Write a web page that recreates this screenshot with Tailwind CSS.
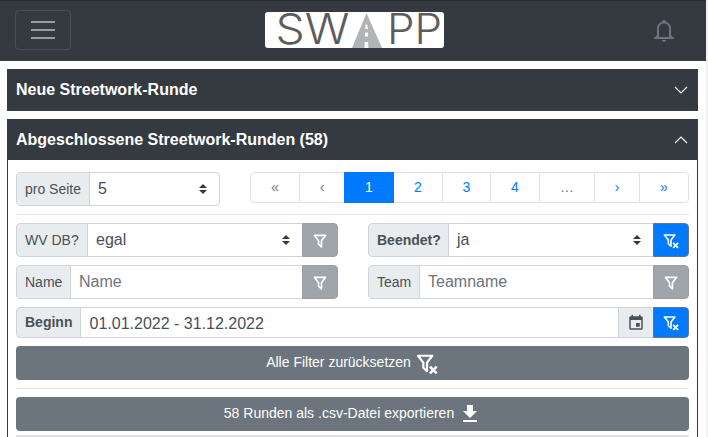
<!DOCTYPE html>
<html lang="de">
<head>
<meta charset="utf-8">
<title>SWAPP</title>
<script src="https://cdn.jsdelivr.net/npm/@tailwindcss/browser@4"></script>
</head>
<body class="w-[708px] h-[437px] overflow-hidden bg-[#f1f1f1] font-['Liberation_Sans',Arial,sans-serif] text-sm text-[#495057]">
<svg class="hidden">
  <symbol id="funnel" viewBox="0 0 24 24"><path fill="none" stroke="currentColor" stroke-width="2.5" stroke-linejoin="round" d="M3.6 3.5h16.8L14.2 11.5v9.2L9.8 16.8v-5.3z"/></symbol>
  <symbol id="funnelx" viewBox="0 0 24 24"><g fill="none" stroke="currentColor" stroke-width="2.4"><path d="M2.2 3h15.6L12 10.5v9.4l-4-3.8v-5.6z" stroke-linejoin="round"/><path d="m15.2 14.8 7.4 7.4m0-7.4-7.4 7.4" stroke-width="2.7"/></g></symbol>
  <symbol id="updown" viewBox="0 0 8 10"><path fill="#343a40" d="M4 0 0 4h8zM4 10 0 6h8z"/></symbol>
</svg>
<div class="w-[706px] h-[437px] bg-white">
  <nav class="h-[61px] bg-[#343a40] border-t border-[#2b2b2b] flex items-center justify-between pl-[15px] pr-[31px] pb-[2px]">
    <button class="w-14 h-10 border border-white/10 rounded flex flex-col items-center justify-center gap-[6px]" aria-label="Menü">
      <span class="w-6 h-[2px] bg-white/50"></span><span class="w-6 h-[2px] bg-white/50"></span><span class="w-6 h-[2px] bg-white/50"></span>
    </button>
    <svg class="w-[179px] h-9 rounded-[3px] bg-white mr-[15px] overflow-visible" viewBox="0 0 179 36" font-family="Inter, Roboto, sans-serif" font-weight="300" fill="#5c5c5c" font-size="42">
      <text x="10.5" y="32.2" textLength="74" lengthAdjust="spacingAndGlyphs">SW</text>
      <path fill="#b1b3b4" d="M101.5 1 117 36H87z"/>
      <path fill="#fff" d="M100.6 12.5h1.8l.4 4.5h-2.6zM100 20.5h2.8l.2 4h-3.2zM99.7 30h3.4l.3 6h-4z"/>
      <text x="122" y="32.2" textLength="55" lengthAdjust="spacingAndGlyphs">PP</text>
    </svg>
    <svg class="w-[22px] h-6 text-[#6c757d] mt-px" viewBox="0 0 22 24" fill="none" stroke="currentColor" stroke-width="2"><path d="M5 18.5V9.6C5 5.8 7.4 3.4 11 3.4s6 2.4 6 6.2v8.9"/><path d="M1.2 19h19.6"/><path fill="currentColor" stroke="none" d="M9.3 3.2a1.8 1.8 0 1 1 3.4 0zM9 21h4a2 2 0 0 1-4 0zM4 16l-2 2.5h3zM18 16l2 2.5h-3z"/></svg>
  </nav>
  <main class="pt-2 pl-[7px] pr-2">
    <section class="h-[42px] bg-[#343a40] text-white flex items-center justify-between pl-[9px] pr-[9px]">
      <h2 class="text-base font-bold">Neue Streetwork-Runde</h2>
      <svg class="w-4 h-4" viewBox="0 0 16 16" fill="none" stroke="currentColor" stroke-width="1.2"><path d="m2 5 6 6 6-6"/></svg>
    </section>
    <section class="mt-2 h-[318px] border-x border-[#343a40]">
      <div class="h-[41px] bg-[#343a40] text-white flex items-center justify-between px-2">
        <h2 class="text-base font-bold">Abgeschlossene Streetwork-Runden (58)</h2>
        <svg class="w-4 h-4" viewBox="0 0 16 16" fill="none" stroke="currentColor" stroke-width="1.2"><path d="m2 11 6-6 6 6"/></svg>
      </div>
      <div class="pt-3 px-2">
        <div class="flex justify-between items-start">
          <div class="w-[204px] h-[34px] border border-[#ced4da] rounded flex items-stretch overflow-hidden">
            <label class="w-[73px] bg-[#e9ecef] border-r border-[#ced4da] pl-2 flex items-center">pro Seite</label>
            <div class="flex-1 flex items-center justify-between pl-2 pr-3 text-base"><span>5</span><svg class="w-2 h-[10px]"><use href="#updown"/></svg></div>
          </div>
          <div class="w-[439px] h-[31px] border border-[#dee2e6] rounded grid grid-cols-[49px_44px_50px_49px_48px_49px_55px_45px_48px] items-stretch text-center leading-[28px] text-[#007bff]">
            <span class="border-r border-[#dee2e6] text-[#6c757d]">«</span><span class="text-[#6c757d]">‹</span><span class="bg-[#007bff] text-white -my-px pt-px">1</span><span class="border-r border-[#dee2e6]">2</span><span class="border-r border-[#dee2e6]">3</span><span class="border-r border-[#dee2e6]">4</span><span class="border-r border-[#dee2e6] text-[#6c757d]">…</span><span class="border-r border-[#dee2e6]">›</span><span>»</span>
          </div>
        </div>
        <hr class="mt-2 mb-2 border-black/10">
        <div class="grid grid-cols-[322px_321px] gap-x-[30px] gap-y-2">
          <div class="h-[34px] flex items-stretch rounded overflow-hidden">
            <label class="w-[72px] bg-[#e9ecef] border border-[#ced4da] rounded-l pl-2 flex items-center">WV DB?</label>
            <div class="flex-1 border-y border-[#ced4da] flex items-center justify-between pl-2 pr-3 text-base"><span>egal</span><svg class="w-2 h-[10px]"><use href="#updown"/></svg></div>
            <button class="w-9 bg-[#a0a5ab] border border-[#989ea4] text-white flex items-center justify-center rounded-r"><svg class="w-4 h-4 mt-[2px]"><use href="#funnel"/></svg></button>
          </div>
          <div class="h-[34px] flex items-stretch rounded overflow-hidden">
            <label class="w-[81px] bg-[#e9ecef] border border-[#ced4da] rounded-l pl-2 flex items-center font-bold">Beendet?</label>
            <div class="flex-1 border-y border-[#ced4da] flex items-center justify-between pl-2 pr-3 text-base"><span>ja</span><svg class="w-2 h-[10px]"><use href="#updown"/></svg></div>
            <button class="w-9 bg-[#007bff] border border-[#6c757d] text-white flex items-center justify-center rounded-r"><svg class="w-4 h-4 mt-[2px]"><use href="#funnelx"/></svg></button>
          </div>
          <div class="h-[34px] flex items-stretch rounded overflow-hidden">
            <label class="w-[55px] bg-[#e9ecef] border border-[#ced4da] rounded-l pl-2 flex items-center">Name</label>
            <div class="flex-1 border-y border-[#ced4da] flex items-center pl-2 text-base text-[#6c757d]"><span>Name</span></div>
            <button class="w-9 bg-[#a0a5ab] border border-[#989ea4] text-white flex items-center justify-center rounded-r"><svg class="w-4 h-4 mt-[2px]"><use href="#funnel"/></svg></button>
          </div>
          <div class="h-[34px] flex items-stretch rounded overflow-hidden">
            <label class="w-[52px] bg-[#e9ecef] border border-[#ced4da] rounded-l pl-2 flex items-center">Team</label>
            <div class="flex-1 border-y border-[#ced4da] flex items-center pl-2 text-base text-[#6c757d]"><span>Teamname</span></div>
            <button class="w-9 bg-[#a0a5ab] border border-[#989ea4] text-white flex items-center justify-center rounded-r"><svg class="w-4 h-4 mt-[2px]"><use href="#funnel"/></svg></button>
          </div>
          <div class="col-span-2 h-[31px] flex items-stretch rounded overflow-hidden">
            <label class="w-[65px] bg-[#e9ecef] border border-[#ced4da] rounded-l pl-2 pb-[2px] flex items-center font-bold">Beginn</label>
            <div class="flex-1 border-y border-[#ced4da] flex items-center pl-[8.5px] text-base"><span class="mt-[2px]">01.01.2022 - 31.12.2022</span></div>
            <div class="w-[35px] bg-[#e9ecef] border border-r-0 border-[#ced4da] flex items-center justify-center">
              <svg class="w-[18px] h-[18px]" viewBox="0 0 24 24" fill="currentColor"><path d="M19 19H5V8h14m-3-7v2H8V1H6v2H5c-1.11 0-2 .89-2 2v14a2 2 0 0 0 2 2h14a2 2 0 0 0 2-2V5a2 2 0 0 0-2-2h-1V1m-1 11h-5v5h5v-5z"/></svg>
            </div>
            <button class="w-9 bg-[#007bff] border border-[#6c757d] text-white flex items-center justify-center rounded-r"><svg class="w-4 h-4 mt-px"><use href="#funnelx"/></svg></button>
          </div>
        </div>
        <button class="mt-2 w-full h-[34px] bg-[#6c757d] rounded text-white flex items-center justify-center gap-[6px]"><span class="-mt-[2px]">Alle Filter zurücksetzen</span><svg class="w-[22px] h-[22px] mt-[2px] -ml-px mr-px"><use href="#funnelx"/></svg></button>
        <hr class="mt-2 mb-2 border-black/10">
        <button class="w-full h-[34px] bg-[#6c757d] rounded text-white flex items-center justify-center gap-[9px] pr-[4px]"><span class="-mt-[2px]">58 Runden als .csv-Datei exportieren</span><svg class="w-[14px] h-[17px] -mt-px" viewBox="0 0 14 17" fill="currentColor"><path d="M14 6h-4V0H4v6H0l7 7zM0 15v2h14v-2z"/></svg></button>
        <div class="mt-1 h-[2px] bg-[#dee2e6]"></div>
      </div>
    </section>
  </main>
</div>
</body>
</html>
